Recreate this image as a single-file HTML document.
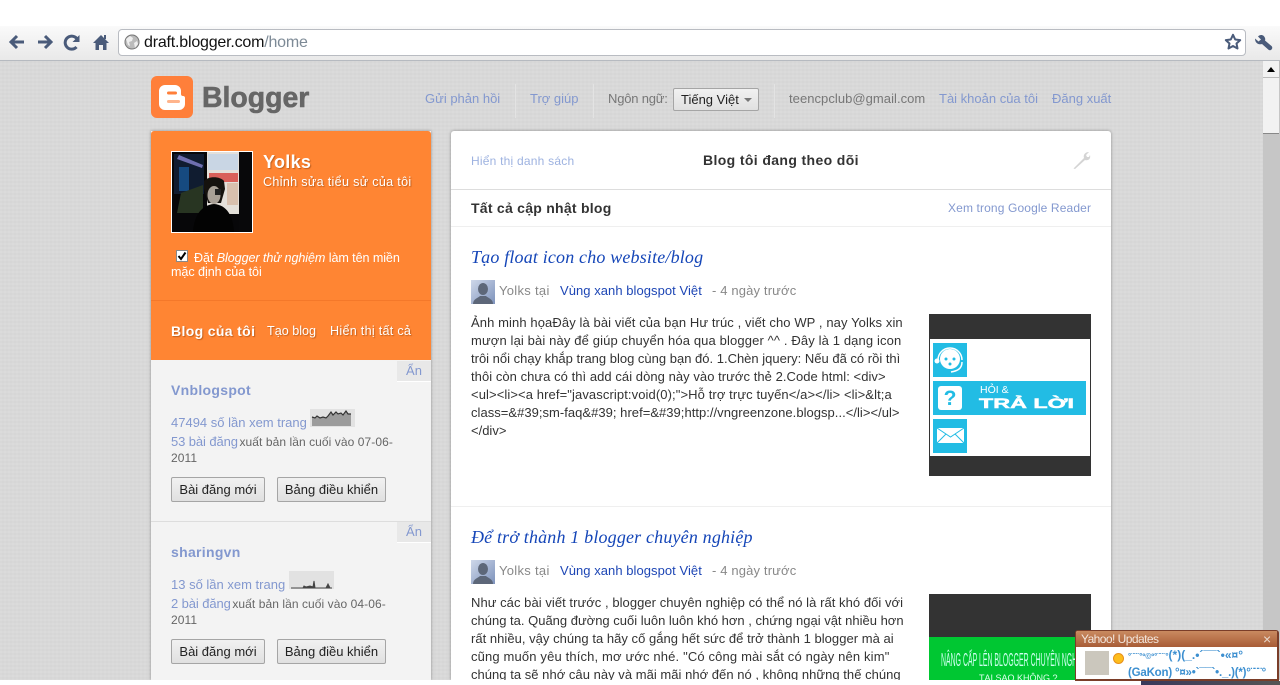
<!DOCTYPE html>
<html lang="vi"><head><meta charset="utf-8"><title>Blogger</title>
<style>
html,body{margin:0;padding:0;width:1280px;height:685px;overflow:hidden;background:#fff}
body{position:relative;font-family:"Liberation Sans",Arial,sans-serif;font-size:13px;color:#666}
.a{position:absolute}
.t{position:absolute;white-space:nowrap;line-height:18px}
.l{color:#8398cf}
.w{color:#fff;text-shadow:1px 1px 1px rgba(120,50,0,.45)}
.b{font-weight:bold}
.btn{position:absolute;box-sizing:border-box;height:25px;border:1px solid #a5a5a5;border-radius:2px;background:linear-gradient(#f1f1f1,#e0e0e0);color:#222;text-align:center;line-height:23px;white-space:nowrap}
.body{position:absolute;left:471px;color:#333;font-size:13px;line-height:18px;white-space:nowrap}
.title{position:absolute;left:471px;font-family:"Liberation Serif",serif;font-style:italic;font-size:18px;line-height:22px;color:#1546b8;white-space:nowrap;letter-spacing:.17px}
.an{position:absolute;left:397px;width:34px;height:20px;background:#e8e8e8;border-bottom:1px solid #fff;color:#8398cf;font-size:13px;text-align:center;line-height:20px}
.sep{position:absolute;top:84px;width:1px;height:34px;background:#e3e3e3}
.s12{font-size:12px;letter-spacing:.07px}
</style></head><body>
<div class="a" style="left:0;top:26px;width:1280px;height:34px;background:linear-gradient(#fafafa,#e9e9e9)"></div>
<div class="a" style="left:0;top:60px;width:1280px;height:1px;background:#b6bac0"></div>
<div class="a" style="left:0;top:61px;width:1263px;height:619px;background-color:#d9d9d9;background-image:linear-gradient(90deg,rgba(255,255,255,.06) 50%,transparent 50%),linear-gradient(rgba(0,0,0,.012) 50%,transparent 50%);background-size:4px 4px"></div>
<svg class="a" style="left:0;top:26px" width="115" height="34" viewBox="0 0 115 34" fill="none" stroke="#4a5b7a" stroke-width="3">
<path d="M24 16H13M17 10L11 16l6 6"/><path d="M38 16H50M45 10l6 6-6 6"/>
<path d="M78 15a6.500 6.500 0 1 0-1.500 6" /><path d="M79.500 9v7h-7z" fill="#4a5b7a" stroke="none"/>
<path d="M93 17l8-8 8 8h-2.500v7h-3.500v-5h-4v5h-3.500v-7z" fill="#4a5b7a" stroke="none"/><path d="M104 9h2v4h-2z" fill="#4a5b7a" stroke="none"/></svg>
<div class="a" style="left:118px;top:29px;width:1126px;height:25px;border:1px solid #b9bcc2;border-radius:4px;background:#fff"></div>
<svg class="a" style="left:124px;top:34px" width="16" height="16" viewBox="0 0 16 16"><circle cx="8" cy="8" r="7.500" fill="#bbb"/><path d="M2 5l4-3 3 2-1 3-3 1 1 4-2-1zM10 9l3-2 1 3-3 4z" fill="#eee"/><circle cx="8" cy="8" r="7" fill="none" stroke="#777"/></svg>
<div class="t" style="left:144px;top:34px;font-size:16px;letter-spacing:-.2px;color:#111">draft.blogger.com<span style="color:#7d8a96">/home</span></div>
<svg class="a" style="left:1224px;top:33px" width="18" height="18" viewBox="0 0 18 18"><path d="M9 1.800l2.200 4.700 5 .6-3.700 3.400 1 5L9 13l-4.500 2.500 1-5L1.800 7.100l5-.6z" fill="#fff" stroke="#4a5b7a" stroke-width="2" stroke-linejoin="round"/></svg>
<svg class="a" style="left:1254px;top:33px" width="19" height="18" viewBox="0 0 19 18"><path d="M1 5.500L4.500 8.500 7 6.500 4 3.500 C6 1 10 1.500 11 5c.3 1 .3 1.500 0 2.500l6.500 5.500c1 1 1 2.500 0 3.500s-2 1-3 .2L8 11c-3 1-7-.5-7-5.500z" fill="#4a5b7a"/></svg>

<!-- scrollbar -->
<div class="a" style="left:1263px;top:61px;width:17px;height:619px;background:#c6c6c6"></div>
<div class="a" style="left:1263px;top:61px;width:16px;height:16px;background:#f2f2f2;border:solid #bbb;border-width:0 1px 1px 0"></div>
<div class="a" style="left:1267px;top:67px;border:4px solid transparent;border-bottom:5px solid #000;border-top:0"></div>
<div class="a" style="left:1263px;top:78px;width:16px;height:55px;background:#f2f2f2;border-bottom:1px solid #888"></div>

<!-- logo -->
<div class="a" style="left:151px;top:76px;width:42px;height:42px;border-radius:6px;background:#ff7f3a"></div>
<svg class="a" style="left:151px;top:76px" width="42" height="42" viewBox="0 0 42 42"><path d="M14 9h10a6 6 0 0 1 6 6v3a2 2 0 0 0 2 2h0a2 2 0 0 1 2 2v6a6 6 0 0 1-6 6H14a6 6 0 0 1-6-6V15a6 6 0 0 1 6-6z" fill="#fff"/><rect x="16" y="15.500" width="10" height="3" rx="1.500" fill="#ff7f3a"/><rect x="16" y="24" width="13" height="3" rx="1.500" fill="#ffb48c"/></svg>
<div class="t" style="left:202px;top:82px;font-size:29px;line-height:32px;font-weight:bold;color:#666;-webkit-text-stroke:.6px #666;transform-origin:0 0;transform:scaleX(.98)">Blogger</div>

<div class="t l" style="left:425px;top:90px">Gửi phản hồi</div>
<div class="sep" style="left:515px"></div>
<div class="t l" style="left:530px;top:90px">Trợ giúp</div>
<div class="sep" style="left:593px"></div>
<div class="t" style="left:608px;top:90px;color:#777;letter-spacing:-.2px">Ngôn ngữ:</div>
<div class="btn" style="left:673px;top:88px;width:86px;height:23px;line-height:21px;text-align:left;padding-left:7px">Tiếng Việt<span class="a" style="left:70px;top:9px;border:4px solid transparent;border-top:4px solid #777;border-bottom:0"></span></div>
<div class="sep" style="left:774px"></div>
<div class="t" style="left:789px;top:90px;color:#777;letter-spacing:.05px">teencpclub@gmail.com</div>
<div class="t l" style="left:939px;top:90px">Tài khoản của tôi</div>
<div class="t l" style="left:1052px;top:90px">Đăng xuất</div>

<!-- left panel -->
<div class="a" style="left:151px;top:131px;width:280px;height:549px;background:#f3f3f3;box-shadow:0 0 3px rgba(0,0,0,.35)"></div>
<div class="a" style="left:151px;top:131px;width:280px;height:229px;background:#ff8533;border-radius:3px 3px 0 0"></div>
<div class="a" style="left:151px;top:300px;width:280px;height:1px;background:#f4782a"></div>
<svg class="a" style="left:171px;top:151px" width="82" height="82" viewBox="0 0 82 82">
<rect width="82" height="82" fill="#fff"/><rect x="1" y="1" width="80" height="80" fill="#070709"/>
<rect x="3" y="3" width="30" height="40" fill="#101c30"/><path d="M8 4l24 10-1 3L6 8z" fill="#6f6fb0"/><rect x="8" y="16" width="10" height="24" fill="#164a80"/><path d="M6 62l4-20 22-8v28z" fill="#283522"/>
<rect x="36" y="1" width="32" height="62" fill="#e4e0da"/><rect x="37" y="3" width="30" height="16" fill="#c9d6e4"/><rect x="38" y="22" width="29" height="9" fill="#d9605a"/><rect x="56" y="32" width="11" height="22" fill="#d8c0ae"/>
<path d="M33 30c4-5 16-5 20 0l1 8-4 14H37l-4-14z" fill="#15120e"/><ellipse cx="43" cy="44" rx="6.500" ry="9" fill="#a8a096"/><rect x="44" y="38" width="6" height="6" fill="#222"/><path d="M22 81c1-16 8-27 21-28 13 1 19 12 20 28z" fill="#030303"/>
<rect x="68" y="1" width="13" height="80" fill="#08080a"/></svg>
<div class="t w b" style="left:263px;top:152px;font-size:18px;line-height:20px;letter-spacing:.3px">Yolks</div>
<div class="t w" style="left:263px;top:173px;font-size:12.600px;letter-spacing:.31px">Chỉnh sửa tiểu sử của tôi</div>
<div class="a" style="left:176px;top:250px;width:10px;height:10px;border:1px solid #888;background:#fff"></div>
<svg class="a" style="left:176px;top:250px" width="12" height="12" viewBox="0 0 12 12"><path d="M2.500 6l2.500 3 4.500-6.500" fill="none" stroke="#000" stroke-width="2"/></svg>
<div class="t" style="left:194px;top:249px;color:#fff;font-size:12.600px;letter-spacing:-.09px">Đặt <i>Blogger thử nghiệm</i> làm tên miền</div>
<div class="t" style="left:171px;top:263px;color:#fff;font-size:12.600px;letter-spacing:-.06px">mặc định của tôi</div>
<div class="t w b" style="left:171px;top:322px;font-size:14px;letter-spacing:.35px">Blog của tôi</div>
<div class="t w" style="left:267px;top:322px;font-size:12.600px">Tạo blog</div>
<div class="t w" style="left:330px;top:322px;font-size:12.600px;letter-spacing:.28px">Hiển thị tất cả</div>

<div class="an" style="top:361px">Ẩn</div>
<div class="t l b" style="left:171px;top:381px;font-size:14px;letter-spacing:.3px">Vnblogspot</div>
<div class="t l" style="left:171px;top:414px">47494 số lần xem trang</div>
<svg class="a" style="left:310px;top:409px" width="45" height="18" viewBox="0 0 45 18"><rect width="45" height="18" fill="#e2e2e2"/><path d="M2 8l3 1 2-2 3 2 3-1 3 1 2-2 3-4 2 3 3-3 2 2 3-1 2 2 3-4 2 3 3 0V17H2z" fill="#9c9c9c"/><path d="M2 8l3 1 2-2 3 2 3-1 3 1 2-2 3-4 2 3 3-3 2 2 3-1 2 2 3-4 2 3 3 0" fill="none" stroke="#333" stroke-width="1.200"/></svg>
<div class="t" style="left:171px;top:433px"><span class="l" style="letter-spacing:-.1px">53 bài đăng</span> <span class="s12" style="margin-left:-2px">xuất bản lần cuối vào 07-06-</span></div>
<div class="t s12" style="left:171px;top:449px">2011</div>
<div class="btn" style="left:171px;top:477px;width:94px">Bài đăng mới</div>
<div class="btn" style="left:277px;top:477px;width:109px">Bảng điều khiển</div>
<div class="a" style="left:151px;top:521px;width:280px;height:1px;background:#ddd"></div>
<div class="an" style="top:522px">Ẩn</div>
<div class="t l b" style="left:171px;top:543px;font-size:14px;letter-spacing:.3px">sharingvn</div>
<div class="t l" style="left:171px;top:576px">13 số lần xem trang</div>
<svg class="a" style="left:289px;top:571px" width="45" height="18" viewBox="0 0 45 18"><rect width="45" height="18" fill="#e2e2e2"/><path d="M2 17H14l1-2 2 1 4-1 3 1 1-6 1 7H37l2-4 2 4h2z" fill="#444" stroke="#444"/></svg>
<div class="t" style="left:171px;top:595px"><span class="l" style="letter-spacing:-.1px">2 bài đăng</span> <span class="s12" style="margin-left:-2px">xuất bản lần cuối vào 04-06-</span></div>
<div class="t s12" style="left:171px;top:611px">2011</div>
<div class="btn" style="left:171px;top:639px;width:94px">Bài đăng mới</div>
<div class="btn" style="left:277px;top:639px;width:109px">Bảng điều khiển</div>

<!-- main panel -->
<div class="a" style="left:451px;top:131px;width:660px;height:549px;background:#fff;border-radius:3px 3px 0 0;box-shadow:0 0 3px rgba(0,0,0,.35)"></div>
<div class="t" style="left:471px;top:152px;font-size:12px;letter-spacing:.22px;color:#9db2e0">Hiển thị danh sách</div>
<div class="t b" style="left:703px;top:151px;font-size:14px;letter-spacing:.37px;color:#333">Blog tôi đang theo dõi</div>
<svg class="a" style="left:1072px;top:150px" width="19" height="20" viewBox="0 0 19 20"><path d="M1.500 18.500L12 8c-1-3 1-6 5-6l-3 3 1 2 2 0 1-2c1 4-2 6-5 5L3 19z" fill="#d4d4d4"/></svg>
<div class="a" style="left:451px;top:189px;width:660px;height:1px;background:#ddd"></div>
<div class="t b" style="left:471px;top:199px;font-size:14px;letter-spacing:.26px;color:#333">Tất cả cập nhật blog</div>
<div class="t" style="left:948px;top:199px;font-size:12px;letter-spacing:.13px;color:#8398cf">Xem trong Google Reader</div>
<div class="a" style="left:451px;top:226px;width:660px;height:1px;background:#efefef"></div>

<div class="title" style="top:246px">Tạo float icon cho website/blog</div>
<svg class="a" style="left:471px;top:280px" width="24" height="24" viewBox="0 0 24 24"><defs><linearGradient id="g" x1="0" y1="0" x2="1" y2="1"><stop offset="0" stop-color="#cfd8ea"/><stop offset="1" stop-color="#7d92bb"/></linearGradient></defs><rect width="24" height="24" fill="url(#g)"/><ellipse cx="12" cy="9" rx="5" ry="6" fill="#5d6779"/><path d="M2 24c0-5 5-6 7-8h6c2 2 7 3 7 8z" fill="#5d6779"/></svg>
<div class="t" style="left:499px;top:282px;color:#888;letter-spacing:.3px">Yolks tại</div>
<div class="t" style="left:560px;top:282px;color:#1d46b5;letter-spacing:.05px">Vùng xanh blogspot Việt</div>
<div class="t" style="left:712px;top:282px;color:#888;letter-spacing:.15px">- 4 ngày trước</div>
<div class="body" style="top:314px"><span style="letter-spacing:.097px">Ảnh minh họaĐây là bài viết của bạn Hư trúc , viết cho WP , nay Yolks xin</span><br><span style="letter-spacing:.13px">mượn lại bài này để giúp chuyển hóa qua blogger ^^ . Đây là 1 dạng icon</span><br>trôi nổi chạy khắp trang blog cùng bạn đó. 1.Chèn jquery: Nếu đã có rồi thì<br><span style="letter-spacing:.05px">thôi còn chưa có thì add cái dòng này vào trước thẻ 2.Code html: &lt;div&gt;</span><br><span style="letter-spacing:.1px">&lt;ul&gt;&lt;li&gt;&lt;a href="javascript:void(0);"&gt;Hỗ trợ trực tuyến&lt;/a&gt;&lt;/li&gt; &lt;li&gt;&amp;lt;a</span><br><span style="letter-spacing:.03px">class=&amp;#39;sm-faq&amp;#39; href=&amp;#39;http://vngreenzone.blogsp...&lt;/li&gt;&lt;/ul&gt;</span><br>&lt;/div&gt;</div>

<svg class="a" style="left:929px;top:314px" width="162" height="162" viewBox="0 0 162 162">
<rect width="162" height="162" fill="#333"/><rect x="1" y="25" width="160" height="117" fill="#fff"/>
<rect x="4" y="29" width="34" height="34" fill="#22bce4"/><rect x="4" y="67" width="153" height="34" fill="#22bce4"/><rect x="4" y="105" width="34" height="34" fill="#22bce4"/>
<circle cx="21" cy="45" r="10" fill="#fff"/><path d="M9 46a12 12 0 0 1 24 0" fill="none" stroke="#fff" stroke-width="1.500"/><circle cx="8" cy="47" r="2.500" fill="#fff"/><path d="M33 48c0 7-5 9-11 10" fill="none" stroke="#fff" stroke-width="1.500"/><circle cx="17" cy="45" r="1.500" fill="#22bce4"/><circle cx="25" cy="45" r="1.500" fill="#22bce4"/><circle cx="21" cy="50" r="1.500" fill="#22bce4"/>
<rect x="9" y="72" width="24" height="24" rx="3" fill="#fff"/><text x="21" y="91" text-anchor="middle" font-size="21" font-weight="bold" fill="#22bce4" font-family="Liberation Sans">?</text>
<text x="51" y="79" font-size="10.500" fill="#fff" font-family="Liberation Sans">HỎI &amp;</text>
<text x="50" y="94" font-size="14" font-weight="bold" fill="#fff" stroke="#fff" stroke-width=".5" font-family="Liberation Sans" textLength="95" lengthAdjust="spacingAndGlyphs">TRẢ LỜI</text>
<rect x="8" y="114" width="27" height="15" fill="#fff"/><path d="M8 114l13.500 9L35 114M8 129l9-9M35 129l-9-9" fill="none" stroke="#22bce4" stroke-width="1"/></svg>

<div class="a" style="left:451px;top:506px;width:660px;height:1px;background:#efefef"></div>
<div class="title" style="top:526px">Để trở thành 1 blogger chuyên nghiệp</div>
<svg class="a" style="left:471px;top:560px" width="24" height="24" viewBox="0 0 24 24"><rect width="24" height="24" fill="url(#g)"/><ellipse cx="12" cy="9" rx="5" ry="6" fill="#5d6779"/><path d="M2 24c0-5 5-6 7-8h6c2 2 7 3 7 8z" fill="#5d6779"/></svg>
<div class="t" style="left:499px;top:562px;color:#888;letter-spacing:.3px">Yolks tại</div>
<div class="t" style="left:560px;top:562px;color:#1d46b5;letter-spacing:.05px">Vùng xanh blogspot Việt</div>
<div class="t" style="left:712px;top:562px;color:#888;letter-spacing:.15px">- 4 ngày trước</div>
<div class="body" style="top:594px;height:86px;overflow:hidden"><span style="letter-spacing:.05px">Như các bài viết trước , blogger chuyên nghiệp có thể nó là rất khó đối với</span><br>chúng ta. Quãng đường cuối luôn luôn khó hơn , chứng ngại vật nhiều hơn<br><span style="letter-spacing:.03px">rất nhiều, vậy chúng ta hãy cố gắng hết sức để trở thành 1 blogger mà ai</span><br><span style="letter-spacing:.15px">cũng muốn yêu thích, mơ ước nhé. "Có công mài sắt có ngày nên kim"</span><br><span style="letter-spacing:.03px">chúng ta sẽ nhớ câu này và mãi mãi nhớ đến nó , không những thế chúng</span></div>
<div class="a" style="left:929px;top:594px;width:162px;height:43px;background:#333"></div>
<div class="a" style="left:929px;top:637px;width:162px;height:43px;background:#00c732;overflow:hidden">
<div class="t" style="left:12px;top:14px;font-size:18px;color:#cfe;transform-origin:0 0;transform:scaleX(.385)">NÂNG CẤP LÊN BLOGGER CHUYÊN NGHIỆP</div>
<div class="t" style="left:50px;top:32px;font-size:9px;color:#dfe">TẠI SAO KHÔNG ?</div></div>

<!-- bottom -->
<div class="a" style="left:0;top:680px;width:1280px;height:5px;background:#fff"></div>
<div class="a" style="left:1141px;top:681px;width:139px;height:4px;background:linear-gradient(90deg,#39385a,#555)"></div>

<!-- yahoo -->
<div class="a" style="left:1075px;top:630px;width:201px;height:48px;border:1px solid #7a3d28;border-bottom-width:2px;border-right-width:2px;border-radius:3px 3px 0 0;background:#fff;overflow:hidden">
<div class="a" style="left:0;top:0;width:202px;height:16px;background:linear-gradient(#c98a60,#a85c36)"></div>
<div class="t" style="left:5px;top:0;font-size:12px;line-height:17px;color:#f3e6dc;letter-spacing:-.55px">Yahoo! Updates</div>
<div class="t" style="left:187px;top:0;font-size:14px;line-height:16px;color:#e8d8cc">×</div>
<div class="a" style="left:9px;top:20px;width:24px;height:24px;background:#cbc7bd"></div>
<div class="a" style="left:37px;top:22px;width:9px;height:9px;border-radius:50%;background:#fdbd1c;border:1px solid #e8901a"></div>
<div class="t" style="left:52px;top:15px;font-size:8px;font-weight:bold;color:#3c8fd0">°¨¨¨°º©º°¨¨¨°<span style="font-size:12px">(*)(_.•´¯¯`•«¤°</span></div>
<div class="t" style="left:52px;top:33px;font-size:11.500px;font-weight:bold;color:#3c8fd0;letter-spacing:-.2px">(GaKon) °¤»•`¯¯`•._.)(*)°¨¨¨°</div>
</div>
</body></html>
